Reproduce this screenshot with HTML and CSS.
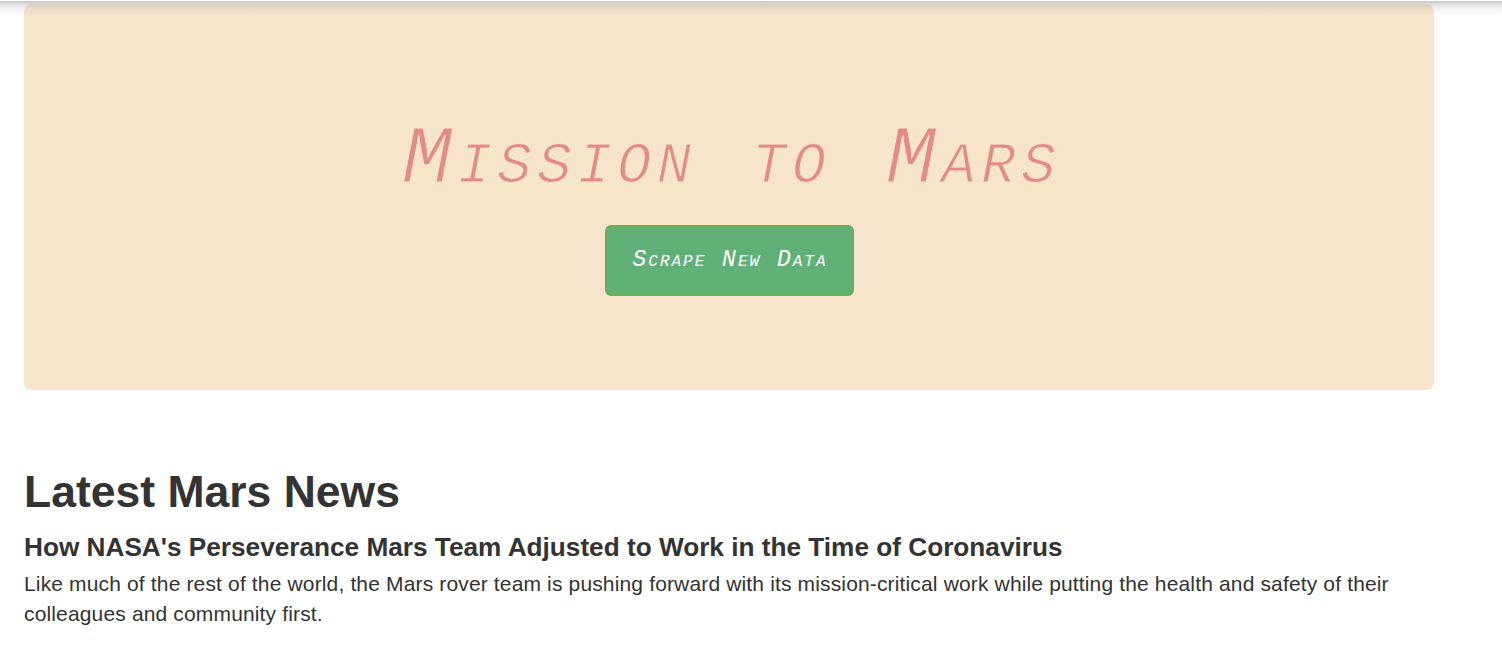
FILE: index.html
```html
<!DOCTYPE html>
<html>
<head>
<meta charset="utf-8">
<link rel="stylesheet" href="styles.css">
</head>
<body>
<div class="topbar"></div>
<div class="page">
  <div class="jumbotron">
    <h1 class="title">Mission to Mars</h1>
    <a class="btn-scrape" href="#">Scrape New Data</a>
  </div>
  <section class="news">
    <h2 class="news-heading">Latest Mars News</h2>
    <h3 class="news-title">How NASA's Perseverance Mars Team Adjusted to Work in the Time of Coronavirus</h3>
    <p class="news-body">Like much of the rest of the world, the Mars rover team is pushing forward with its mission-critical work while putting the health and safety of their colleagues and community first.</p>
  </section>
</div>
</body>
</html>
```
FILE: styles.css
```css
html, body {
  margin: 0;
  padding: 0;
  background: #ffffff;
}
body {
  font-family: "Liberation Sans", Arial, sans-serif;
  color: #333333;
  overflow: hidden;
}
.topbar {
  position: absolute;
  left: 0;
  top: 0;
  width: 100%;
  height: 16px;
  z-index: 5;
  pointer-events: none;
  background: linear-gradient(to bottom,
    rgba(255,255,255,1) 0px,
    rgba(255,255,255,1) 1px,
    rgba(205,205,207,1) 1px,
    rgba(205,205,207,1) 3px,
    rgba(120,120,130,0.28) 3px,
    rgba(120,120,130,0.10) 8px,
    rgba(120,120,130,0) 16px);
}
.page {
  width: 1410px;
  padding: 4px 0 0 24px;
}
.jumbotron {
  background: #f6e4cb;
  border-radius: 8px;
  padding: 105px 0 94px;
  text-align: center;
}
.title {
  margin: 0 0 12px;
  font-family: "Liberation Mono", "Courier New", monospace;
  font-style: italic;
  font-variant: small-caps;
  font-weight: normal;
  font-size: 82px;
  line-height: 104px;
  letter-spacing: 5.7px;
  text-indent: 5.7px;
  color: #e58b85;
  -webkit-text-stroke: 1.2px #f6e4cb;
}
.btn-scrape {
  display: inline-block;
  box-sizing: border-box;
  width: 249px;
  height: 71px;
  line-height: 67px;
  background: #61b077;
  border: 2px solid #6aae59;
  border-radius: 6px;
  color: #ffffff;
  text-decoration: none;
  font-family: "Liberation Mono", "Courier New", monospace;
  font-style: italic;
  font-variant: small-caps;
  font-size: 23px;
  letter-spacing: 2px;
  text-indent: 2px;
}
.news {
  padding-top: 77px;
}
.news-heading {
  margin: 0 0 16px;
  font-size: 44.5px;
  line-height: 49.5px;
  font-weight: bold;
}
.news-title {
  margin: 0 0 8px;
  font-size: 26.2px;
  line-height: 28px;
  font-weight: bold;
}
.news-body {
  margin: 0;
  font-size: 21px;
  line-height: 30px;
  letter-spacing: 0.15px;
}
```
